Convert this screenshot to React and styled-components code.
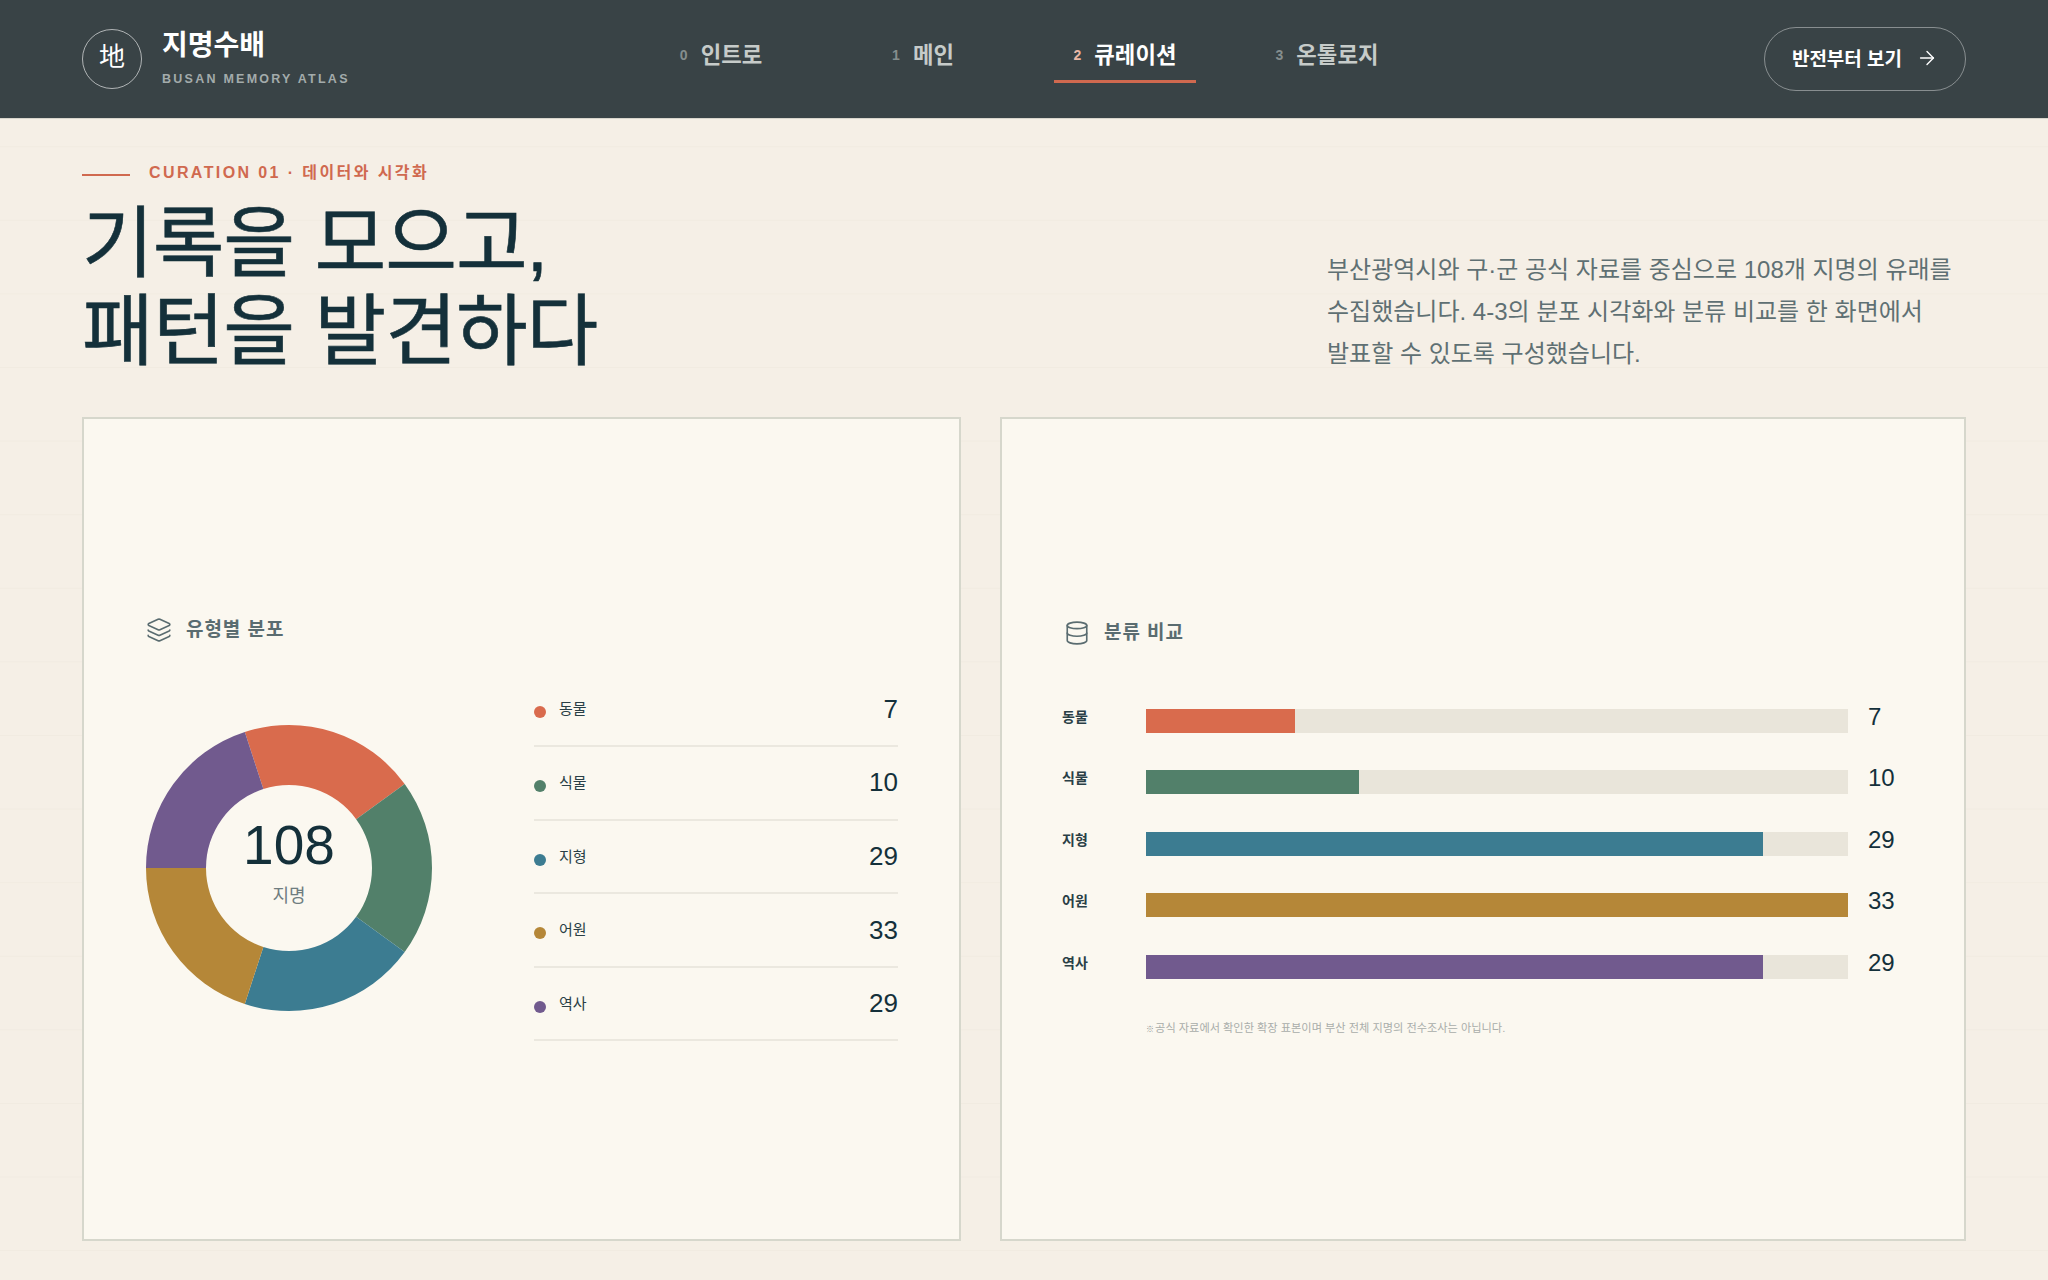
import React from 'react';
import styled, { createGlobalStyle } from 'styled-components';
import { ArrowRight, Layers, Database } from 'lucide-react';

const GlobalStyle = createGlobalStyle`
  * { box-sizing: border-box; }
  html, body { margin: 0; padding: 0; }
  body {
    font-family: "Liberation Sans", "Noto Sans CJK KR", sans-serif;
    background: #f5efe6;
    color: #14303a;
  }
`;

const Page = styled.div`
  width: 2048px;
  height: 1280px;
  overflow: hidden;
  display: flex;
  flex-direction: column;
  background-color: #f5efe6;
  background-image: linear-gradient(to bottom, transparent calc(100% - 1px), #f1ebe1 0);
  background-size: 100% 73.6px;
`;

const Header = styled.header`
  height: 119px;
  flex: none;
  display: grid;
  grid-template-columns: 1fr auto 1fr;
  align-items: center;
  padding: 0 82px;
  background: #394346;
  border-bottom: 1px solid #d8d5cc;
`;

const Brand = styled.div`
  display: flex;
  align-items: center;
  gap: 20px;
`;

const Seal = styled.div`
  width: 60px;
  height: 60px;
  padding-bottom: 9px;
  border-radius: 50%;
  border: 1px solid rgba(255, 255, 255, 0.6);
  display: flex;
  align-items: center;
  justify-content: center;
  color: #fff;
  font-size: 26px;
  font-weight: 400;
`;

const BrandText = styled.div`
  display: flex;
  flex-direction: column;
  gap: 7px;
  margin-top: -4px;
`;

const BrandName = styled.div`
  color: #fff;
  font-size: 28px;
  line-height: 36px;
  font-weight: 700;
`;

const BrandSub = styled.div`
  color: #a3abab;
  font-size: 12.5px;
  line-height: 16px;
  font-weight: 700;
  letter-spacing: 0.18em;
`;

const Nav = styled.nav`
  display: grid;
  grid-template-columns: repeat(4, 202px);
  justify-items: center;
  margin-bottom: 10px;
`;

const NavItem = styled.a`
  display: flex;
  align-items: center;
  gap: 13px;
  height: 58px;
  padding: 0 20px;
  border-bottom: 3px solid ${(p) => (p.$active ? '#d0694f' : 'transparent')};
  color: ${(p) => (p.$active ? '#fff' : '#c6cbc9')};
  font-size: 22.3px;
  font-weight: 700;
`;

const NavNum = styled.span`
  color: ${(p) => (p.$active ? '#eab7a5' : '#858e8e')};
  font-size: 14px;
  margin-top: 4px;
`;

const HeaderRight = styled.div`
  display: flex;
  justify-content: flex-end;
`;

const OutlineButton = styled.button`
  width: 202px;
  height: 64px;
  padding: 0 0 3px;
  border-radius: 32px;
  border: 1px solid rgba(255, 255, 255, 0.4);
  background: transparent;
  color: #fff;
  font-family: inherit;
  font-size: 19px;
  font-weight: 700;
  display: flex;
  align-items: center;
  justify-content: center;
  gap: 14px;
`;

const Main = styled.main`
  flex: 1;
  display: flex;
  flex-direction: column;
  padding: 42px 82px 39px;
`;

const Hero = styled.section`
  display: flex;
  justify-content: space-between;
  align-items: flex-end;
  margin-bottom: 42px;
`;

const HeroLeft = styled.div`
  display: flex;
  flex-direction: column;
`;

const Eyebrow = styled.div`
  display: flex;
  align-items: center;
  gap: 19px;
  color: #d0694f;
  font-size: 16px;
  line-height: 24px;
  font-weight: 700;
  letter-spacing: 0.15em;
  &::before {
    content: "";
    width: 48px;
    height: 2px;
    margin-top: 4px;
    background: #d0694f;
  }
`;

const Title = styled.h1`
  margin: 15px 0 -1px;
  font-size: 78px;
  line-height: 88px;
  font-weight: 400;
  letter-spacing: -0.014em;
  -webkit-text-stroke: 0.6px #14303a;
  color: #14303a;
`;

const Lead = styled.p`
  margin: 0;
  width: 639px;
  font-size: 24px;
  line-height: 42px;
  font-weight: 400;
  word-break: keep-all;
  color: #5f7073;
`;

const Cards = styled.section`
  flex: 1;
  display: grid;
  grid-template-columns: 879px 966px;
  justify-content: space-between;
  min-height: 0;
`;

const Card = styled.article`
  display: flex;
  flex-direction: column;
  justify-content: center;
  padding: 0 62px;
  background: #fbf8f0;
  border: 2px solid #d6d7cc;
`;

const CardTitle = styled.h2`
  display: flex;
  align-items: center;
  gap: 14px;
  margin: 0;
  color: #5a6c70;
  font-size: 19px;
  line-height: 32px;
  font-weight: 700;
  letter-spacing: 0.05em;
  svg { stroke-width: 1.5; }
`;

const DistRow = styled.div`
  display: grid;
  grid-template-columns: 286px 1fr;
  column-gap: 102px;
  align-items: center;
  margin: 28px -1px 3px 0;
`;

const DonutWrap = styled.div`
  position: relative;
  width: 286px;
  height: 286px;
  margin-top: 20px;
`;

const DonutCenter = styled.div`
  position: absolute;
  inset: 0;
  display: flex;
  flex-direction: column;
  align-items: center;
  justify-content: center;
`;

const DonutValue = styled.div`
  font-size: 55px;
  line-height: 64px;
  color: #14303a;
  margin-top: -14px;
`;

const DonutLabel = styled.div`
  font-size: 18px;
  line-height: 26px;
  color: #6f7d80;
  margin-top: 6px;
`;

const Legend = styled.ul`
  list-style: none;
  margin: 0;
  padding: 0;
`;

const LegendRow = styled.li`
  display: flex;
  align-items: center;
  height: 73.6px;
  border-bottom: 2px solid #ebe8df;
`;

const Dot = styled.span`
  width: 12px;
  height: 12px;
  border-radius: 50%;
  background: ${(p) => p.$color};
  margin: 6px 13px 0 0;
`;

const LegendName = styled.span`
  font-size: 15px;
  color: #2a3f46;
  margin-top: -3px;
`;

const LegendValue = styled.span`
  margin-left: auto;
  font-size: 26px;
  color: #14303a;
`;

const Bars = styled.div`
  display: flex;
  flex-direction: column;
  margin-top: 41px;
`;

const BarRow = styled.div`
  display: grid;
  grid-template-columns: 82px 702px 1fr;
  align-items: center;
  height: 61.5px;
`;

const BarLabel = styled.span`
  font-size: 14px;
  font-weight: 700;
  color: #2a3f46;
  margin: -10px 0 0 -2px;
`;

const Track = styled.div`
  height: 24px;
  background: #e9e5da;
`;

const Fill = styled.div`
  height: 100%;
  background: ${(p) => p.$color};
`;

const BarValue = styled.span`
  padding-left: 20px;
  font-size: 24px;
  color: #14303a;
  margin-top: -8px;
`;

const Note = styled.p`
  margin: 22px 0 2px 82px;
  font-size: 11.2px;
  line-height: 18px;
  color: #a9adaa;
`;

const NoteMark = styled.span`
  font-size: 8px;
  color: #8f9593;
  margin-right: -2px;
`;

const NAV = [
  { num: 0, label: '인트로' },
  { num: 1, label: '메인' },
  { num: 2, label: '큐레이션', active: true },
  { num: 3, label: '온톨로지' },
];

const DATA = [
  { name: '동물', value: 7, color: '#d96b4d' },
  { name: '식물', value: 10, color: '#52806a' },
  { name: '지형', value: 29, color: '#3c7c91' },
  { name: '어원', value: 33, color: '#b58738' },
  { name: '역사', value: 29, color: '#715a8e' },
];

const MAX = 33;

// ring slice between two angles, measured clockwise from 12 o'clock
function slicePath(cx, cy, ro, ri, a0, a1) {
  const pt = (r, a) => {
    const t = ((a - 90) * Math.PI) / 180;
    return `${cx + r * Math.cos(t)} ${cy + r * Math.sin(t)}`;
  };
  return `M${pt(ro, a0)} A${ro} ${ro} 0 0 1 ${pt(ro, a1)} L${pt(ri, a1)} A${ri} ${ri} 0 0 0 ${pt(ri, a0)} Z`;
}

function Donut() {
  return (
    <DonutWrap>
      <svg width="286" height="286" viewBox="0 0 286 286">
        {DATA.map((d, i) => (
          <path key={d.name} d={slicePath(143, 143, 143, 83, -18 + i * 72, 54 + i * 72)} fill={d.color} />
        ))}
      </svg>
      <DonutCenter>
        <DonutValue>108</DonutValue>
        <DonutLabel>지명</DonutLabel>
      </DonutCenter>
    </DonutWrap>
  );
}

export default function App() {
  return (
    <Page>
      <GlobalStyle />
      <Header>
        <Brand>
          <Seal>地</Seal>
          <BrandText>
            <BrandName>지명수배</BrandName>
            <BrandSub>BUSAN MEMORY ATLAS</BrandSub>
          </BrandText>
        </Brand>
        <Nav>
          {NAV.map((n) => (
            <NavItem key={n.num} $active={n.active}>
              <NavNum $active={n.active}>{n.num}</NavNum>
              {n.label}
            </NavItem>
          ))}
        </Nav>
        <HeaderRight>
          <OutlineButton>
            반전부터 보기
            <ArrowRight size={22} strokeWidth={1.5} />
          </OutlineButton>
        </HeaderRight>
      </Header>
      <Main>
        <Hero>
          <HeroLeft>
            <Eyebrow>CURATION 01 · 데이터와 시각화</Eyebrow>
            <Title>
              기록을 모으고,
              <br />
              패턴을 발견하다
            </Title>
          </HeroLeft>
          <Lead>
            부산광역시와 구·군 공식 자료를 중심으로 108개 지명의 유래를 수집했습니다. 4-3의 분포 시각화와 분류 비교를 한 화면에서 발표할 수 있도록 구성했습니다.
          </Lead>
        </Hero>
        <Cards>
          <Card>
            <CardTitle>
              <Layers size={26} />
              유형별 분포
            </CardTitle>
            <DistRow>
              <Donut />
              <Legend>
                {DATA.map((d) => (
                  <LegendRow key={d.name}>
                    <Dot $color={d.color} />
                    <LegendName>{d.name}</LegendName>
                    <LegendValue>{d.value}</LegendValue>
                  </LegendRow>
                ))}
              </Legend>
            </DistRow>
          </Card>
          <Card>
            <CardTitle>
              <Database size={26} />
              분류 비교
            </CardTitle>
            <Bars>
              {DATA.map((d) => (
                <BarRow key={d.name}>
                  <BarLabel>{d.name}</BarLabel>
                  <Track>
                    <Fill $color={d.color} style={{ width: `${(d.value / MAX) * 100}%` }} />
                  </Track>
                  <BarValue>{d.value}</BarValue>
                </BarRow>
              ))}
            </Bars>
            <Note>
              <NoteMark>※</NoteMark> 공식 자료에서 확인한 확장 표본이며 부산 전체 지명의 전수조사는 아닙니다.
            </Note>
          </Card>
        </Cards>
      </Main>
    </Page>
  );
}
